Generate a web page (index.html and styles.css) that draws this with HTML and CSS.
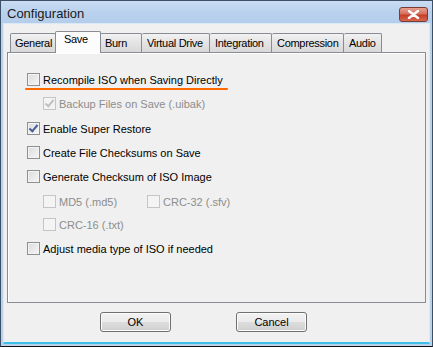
FILE: index.html
```html
<!DOCTYPE html>
<html lang="en">
<head>
    <meta charset="UTF-8">
    <title>Configuration</title>
    <link rel="stylesheet" href="styles.css">
</head>
<body>

    <div class="window">
        <div class="titlebar">
            <span class="title">Configuration</span>
            <div class="close-btn">
                <svg width="13" height="9" viewBox="0 0 13 9">
                    <path d="M2 1 L11 8 M11 1 L2 8" stroke="#fff" stroke-width="2.4" stroke-linecap="round"/>
                </svg>
            </div>
        </div>

        <div class="body">
            <div class="tabs">
                <div class="tab first tab-general">General</div>
                <div class="tab active">Save</div>
                <div class="tab tab-burn">Burn</div>
                <div class="tab tab-virtual">Virtual Drive</div>
                <div class="tab tab-integration">Integration</div>
                <div class="tab tab-compression">Compression</div>
                <div class="tab tab-audio">Audio</div>
            </div>

            <div class="panel">
                <label class="row">
                    <span class="box"></span>Recompile ISO when Saving Directly
                    <span class="mark-line"></span>
                </label>
                <label class="row sub disabled wide">
                    <span class="box checked"></span>Backup Files on Save (.uibak)
                </label>
                <label class="row">
                    <span class="box checked"></span>Enable Super Restore
                </label>
                <label class="row">
                    <span class="box"></span>Create File Checksums on Save
                </label>
                <label class="row wide">
                    <span class="box"></span>Generate Checksum of ISO Image
                </label>
                <div class="row sub pair narrow">
                    <label class="cell disabled"><span class="box"></span>MD5 (.md5)</label>
                    <label class="cell disabled"><span class="box"></span>CRC-32 (.sfv)</label>
                </div>
                <label class="row sub disabled">
                    <span class="box"></span>CRC-16 (.txt)
                </label>
                <label class="row">
                    <span class="box"></span>Adjust media type of ISO if needed
                </label>
            </div>

            <div class="buttons">
                <div class="button">OK</div>
                <div class="button">Cancel</div>
            </div>
        </div>
    </div>

</body>
</html>
```

FILE: styles.css
```css
body {
    margin: 0;
    padding: 0;
    font-family: "Liberation Sans", Arial, sans-serif;
    font-size: 11px;
    background: #ffffff;
}

.window {
    width: 433px;
    height: 347px;
    box-sizing: border-box;
    border: 1px solid #3b4f66;
    border-bottom-color: #111;
    background: #b9d1ea;
    display: flex;
    flex-direction: column;
}

.titlebar {
    height: 22px;
    display: flex;
    align-items: flex-start;
    justify-content: space-between;
    padding: 0 4px 0 6px;
    background: linear-gradient(to bottom, #c9dcf2, #bad2ee 50%, #b4cdeb);
}

.title {
    font-size: 13px;
    color: #1a1a1a;
    padding-top: 5px;
}

.close-btn {
    width: 27px;
    height: 13px;
    margin-top: 6px;
    border: 1px solid #7a3b35;
    border-radius: 3px;
    background: linear-gradient(to bottom, #e8a090, #d6705c 45%, #c43f28 55%, #d8684f);
    display: flex;
    align-items: center;
    justify-content: center;
}

.body {
    flex: 1;
    margin: 0 2px 2px 2px;
    border: 1px solid #dbe8f6;
    border-bottom: 2px solid #3cc0e8;
    background: #f0f0f0;
    padding: 7px 3px 0 3px;
    display: flex;
    flex-direction: column;
}

.tabs {
    display: flex;
    align-items: flex-end;
    padding-left: 3px;
    height: 21px;
    position: relative;
    z-index: 1;
}

.tab {
    height: 19px;
    box-sizing: border-box;
    padding: 3px 0 0 5px;
    border: 1px solid #898c95;
    border-bottom: none;
    border-left: none;
    background: linear-gradient(to bottom, #f2f2f2, #e3e3e3 50%, #d9d9d9);
    border-radius: 2px 2px 0 0;
    color: #000;
    white-space: nowrap;
    letter-spacing: -0.3px;
}

.tab.first {
    border-left: 1px solid #898c95;
    padding-left: 4px;
}

.tab-general { width: 46px; }
.tab-burn { width: 42px; }
.tab-virtual { width: 68px; }
.tab-integration { width: 62px; }
.tab-compression { width: 72px; }
.tab-audio { width: 38px; }

.tab.active {
    width: 46px;
    height: 22px;
    background: #fcfcfc;
    border-left: 1px solid #898c95;
    margin: 0 -1px -1px -1px;
    padding: 1px 0 0 8px;
    position: relative;
    z-index: 2;
}

.panel {
    height: 251px;
    box-sizing: border-box;
    border: 1px solid #898c95;
    background: #f0f0f0;
    box-shadow: inset 1px 1px 0 #ffffff;
    padding: 20px 0 0 19px;
    display: flex;
    flex-direction: column;
}

.row {
    position: relative;
    display: flex;
    align-items: center;
    height: 13px;
    margin-bottom: 11px;
    color: #000;
}

.row.wide {
    margin-bottom: 12px;
}

.row.narrow {
    margin-bottom: 10px;
}

.row.sub {
    padding-left: 16px;
}

.disabled {
    color: #8d8d8d;
}

.pair .cell {
    display: flex;
    align-items: center;
    width: 104px;
}

.box {
    width: 13px;
    height: 13px;
    box-sizing: border-box;
    border: 1px solid #8e8f8f;
    background: linear-gradient(135deg, #dcdcdc, #f6f6f6);
    box-shadow: inset 0 0 0 1px #f4f4f4;
    margin-right: 3px;
    flex-shrink: 0;
    position: relative;
}

.disabled .box {
    border-color: #c5c5c5;
    background: #f4f4f4;
    box-shadow: none;
}

.box.checked::after {
    content: "";
    position: absolute;
    left: 3px;
    top: 0px;
    width: 3px;
    height: 7px;
    border: solid #4a5f9c;
    border-width: 0 2px 2px 0;
    transform: rotate(40deg);
}

.disabled .box.checked::after {
    border-color: #c0c0c0;
}

.mark-line {
    position: absolute;
    left: -2px;
    top: 15px;
    width: 203px;
    height: 2px;
    background: #ff6a00;
    border-radius: 1px;
}

.buttons {
    display: flex;
    gap: 65px;
    margin-top: 9px;
    padding-left: 93px;
}

.button {
    width: 71px;
    height: 20px;
    box-sizing: border-box;
    border: 1px solid #707070;
    border-radius: 3px;
    background: linear-gradient(to bottom, #f2f2f2, #ebebeb 50%, #dddddd 51%, #cfcfcf);
    box-shadow: inset 0 0 0 1px #fcfcfc;
    display: flex;
    align-items: center;
    justify-content: center;
    color: #000;
}
```
